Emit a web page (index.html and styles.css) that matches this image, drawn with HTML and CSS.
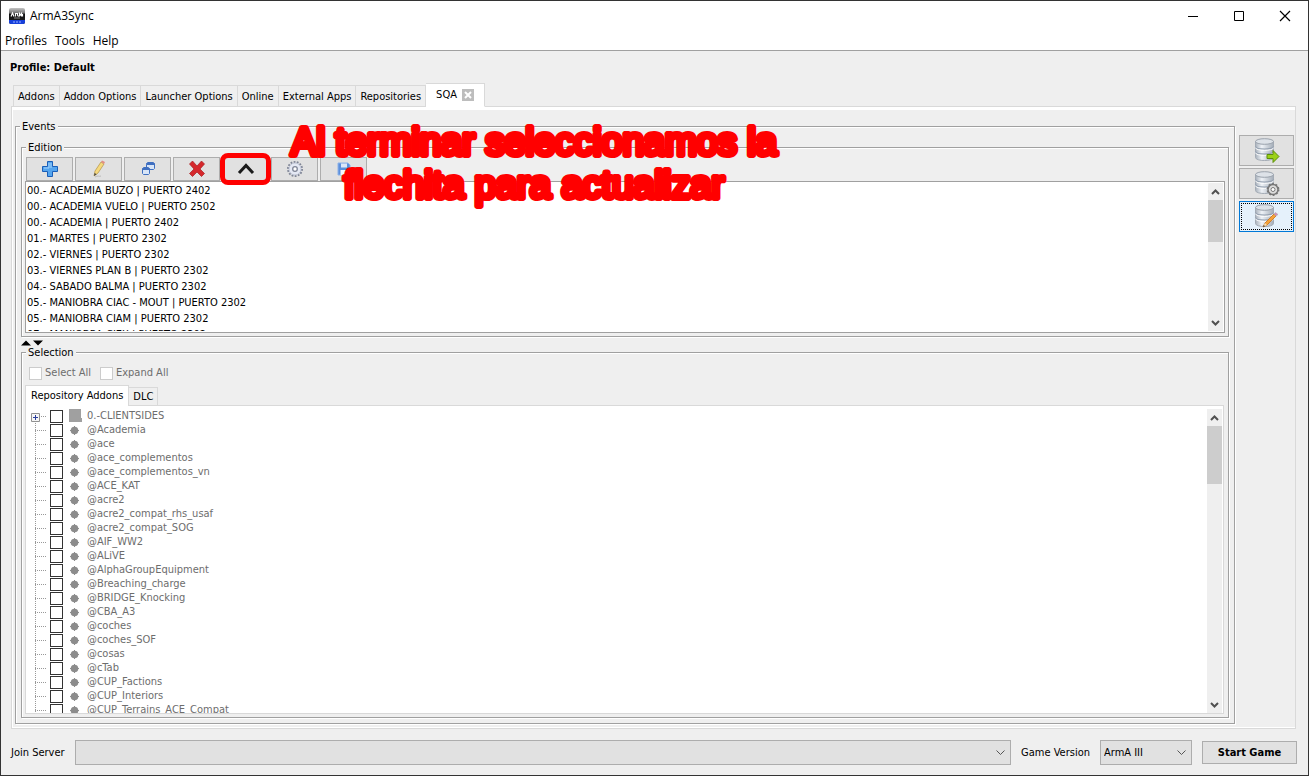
FILE: index.html
```
<!DOCTYPE html>
<html lang="en">
<head>
<meta charset="utf-8">
<title>ArmA3Sync</title>
<link rel="stylesheet" href="styles.css">
</head>
<body>
<svg class="defs" aria-hidden="true">
  <defs>
    <linearGradient id="steel" x1="0" x2="1" y1="0" y2="0">
      <stop offset="0" stop-color="#a9b1bb"/><stop offset=".35" stop-color="#eef2f7"/><stop offset="1" stop-color="#a4adb8"/>
    </linearGradient>
    <linearGradient id="badge" x1="0" x2="0" y1="0" y2="1">
      <stop offset="0" stop-color="#c4c4c4"/><stop offset=".3" stop-color="#777"/><stop offset=".4" stop-color="#111"/><stop offset="1" stop-color="#222"/>
    </linearGradient>
    <symbol id="up" viewBox="0 0 9 6"><path d="M1 5 4.500 1.500 8 5" fill="none" stroke="#505050" stroke-width="2"/></symbol>
    <symbol id="down" viewBox="0 0 9 6"><path d="M1 1 4.500 4.500 8 1" fill="none" stroke="#505050" stroke-width="2"/></symbol>
    <symbol id="db" viewBox="0 0 24 24">
      <path d="M1.500 3.500v16c0 4 18 4 18 0v-16z" fill="url(#steel)" stroke="#a3abb5"/>
      <path d="M1.500 8.500c0 3.500 18 3.500 18 0M1.500 13.500c0 3.500 18 3.500 18 0" fill="none" stroke="#95a1b1" stroke-width="1.300"/>
      <path d="M1.500 9.700c0 3.500 18 3.500 18 0M1.500 14.700c0 3.500 18 3.500 18 0" fill="none" stroke="#fff"/>
      <ellipse cx="10.500" cy="3.500" rx="9" ry="2.800" fill="#dde2e8" stroke="#9aa2ac"/>
    </symbol>
  </defs>
</svg>
<div class="window">
  <header class="titlebar">
    <svg class="app-icon" viewBox="0 0 16 16"><rect width="16" height="16" rx="2" fill="url(#badge)"/><path d="M0 12h16v2a2 2 0 0 1-2 2H2a2 2 0 0 1-2-2z" fill="#1740dc"/><path d="M2 8.500 3.500 5l1.500 3.500M6.500 8.500V5.500h2v1.500l1 1.500M10.500 8.500v-3l1 1.500 1-1.500v3M13.500 8.500V6" fill="none" stroke="#fff" stroke-width="1.200"/><path d="M5 10h6" stroke="#888"/><path d="M4 14h8" stroke="#9db2ff" stroke-dasharray="2 1"/></svg>
    <h1 class="app-name">ArmA3Sync</h1>
    <div class="window-buttons">
      <button class="window-button" aria-label="Minimize"><svg viewBox="0 0 12 12"><path d="M1 6.500h10" stroke="#000"/></svg></button>
      <button class="window-button" aria-label="Maximize"><svg viewBox="0 0 12 12"><path d="M1.500 1.500h9v9h-9z" fill="none" stroke="#000"/></svg></button>
      <button class="window-button" aria-label="Close"><svg viewBox="0 0 12 12"><path d="m1 1 10 10M11 1 1 11" stroke="#000" stroke-width="1.200"/></svg></button>
    </div>
  </header>
  <nav class="menubar">
    <button class="menu">Profiles</button><button class="menu">Tools</button><button class="menu">Help</button>
  </nav>
  <p class="profile">Profile: Default</p>
  <div class="tabs" role="tablist">
    <button class="tab" role="tab">Addons</button><button class="tab" role="tab">Addon Options</button><button class="tab" role="tab">Launcher Options</button><button class="tab" role="tab">Online</button><button class="tab" role="tab">External Apps</button><button class="tab" role="tab">Repositories</button><button class="tab tab-active" role="tab" aria-selected="true">SQA
      <svg class="tab-close" viewBox="0 0 12 12"><path d="M0 0h12v12H0z" fill="#bdbdbd"/><path d="m3 3 6 6M9 3 3 9" stroke="#fff" stroke-width="2"/></svg></button>
  </div>
  <main class="pane">
    <section class="group events">
      <h2 class="legend">Events</h2>
      <section class="group edition">
        <h2 class="legend">Edition</h2>
        <div class="toolbar">
          <button class="tool" aria-label="Add"><svg viewBox="0 0 18 18"><path d="M6.500 1.500h5v5h5v5h-5v5h-5v-5h-5v-5h5z" fill="#55a5ee" stroke="#1b5fb8"/><path d="M8 3v5H3M10 3v5" fill="none" stroke="#a4d3fb"/></svg></button>
          <button class="tool" aria-label="Edit"><svg viewBox="0 0 18 18"><path d="m4 16 1-5 6-9 3 2-6 9z" fill="#f6d97c" stroke="#b99a51" stroke-width=".8"/><path d="m11 2 1-1.500L15 2l-1 2z" fill="#e38d84"/><path d="m4 16 .6-3 2 1.200z" fill="#444"/><path d="M5 17c3-2 4 0 6-1" fill="none" stroke="#bbb"/></svg></button>
          <button class="tool" aria-label="Duplicate"><svg viewBox="0 0 18 18"><path d="M7.500 4.500v-1l1-1h6l1 1v5l-1 1h-6l-1-1z" fill="#d8e5f7" stroke="#3f6fc0"/><path d="M7.500 4h8" stroke="#3f6fc0" stroke-width="2"/><path d="M3.500 8.500l1-1h5l1 1v5l-1 1h-5l-1-1z" fill="#d8e5f7" stroke="#3f6fc0"/><path d="M3.500 9h7" stroke="#3f6fc0" stroke-width="2"/></svg></button>
          <button class="tool" aria-label="Delete"><svg viewBox="0 0 18 18"><path d="m1.500 4 3-3L9 6l4.500-5 3 3L12 9l4.500 4.500-3 3L9 12l-4.500 4.500-3-3L6 9z" fill="#d5282c" stroke="#a71b20" stroke-width=".7"/></svg></button>
          <button class="tool tool-marked" aria-label="Upload"><svg viewBox="0 0 18 18"><path d="m2 13 7-7.500L16 13" fill="none" stroke="#1a1a1a" stroke-width="3"/></svg></button>
          <button class="tool" aria-label="Settings"><svg viewBox="0 0 18 18"><circle cx="9" cy="9" r="7" fill="none" stroke="#7f8596" stroke-width="2" stroke-dasharray="1.800 1.340"/><circle cx="9" cy="9" r="6" fill="#e4e8f3" stroke="#b9bfd2" stroke-width=".8"/><circle cx="9" cy="9" r="2.300" fill="#fff" stroke="#7f8596" stroke-width="1.300"/></svg></button>
          <button class="tool" aria-label="Save"><svg viewBox="0 0 18 18"><path d="M3 3h10l2 2v10H3z" fill="#5b8fdc" stroke="#8db2e8"/><path d="M6 3.500h6v4H6z" fill="#dbe7f8"/><path d="M5.500 10h7v5h-7z" fill="#f4f8fe"/></svg></button>
        </div>
        <div class="list">
          <ul class="rows">
            <li class="row">00.- ACADEMIA BUZO | PUERTO 2402</li>
            <li class="row">00.- ACADEMIA VUELO | PUERTO 2502</li>
            <li class="row">00.- ACADEMIA | PUERTO 2402</li>
            <li class="row">01.- MARTES | PUERTO 2302</li>
            <li class="row">02.- VIERNES | PUERTO 2302</li>
            <li class="row">03.- VIERNES PLAN B | PUERTO 2302</li>
            <li class="row">04.- SABADO BALMA | PUERTO 2302</li>
            <li class="row">05.- MANIOBRA CIAC - MOUT | PUERTO 2302</li>
            <li class="row">05.- MANIOBRA CIAM | PUERTO 2302</li>
            <li class="row">07.- MANIOBRA CIEX | PUERTO 2302</li>
          </ul>
          <div class="scrollbar"><svg class="arrow"><use href="#up"/></svg><div class="track"><div class="thumb"></div></div><svg class="arrow"><use href="#down"/></svg></div>
        </div>
      </section>
      <div class="divider"><svg viewBox="0 0 22 6"><path d="M0 5.500 5 .5l5 5zM12 .5h10l-5 5z"/></svg></div>
      <section class="group selection">
        <h2 class="legend">Selection</h2>
        <div class="options">
          <label class="option"><input class="check" type="checkbox" disabled>Select All</label>
          <label class="option"><input class="check" type="checkbox" disabled>Expand All</label>
        </div>
        <div class="subtabs" role="tablist"><button class="subtab subtab-active" role="tab" aria-selected="true">Repository Addons</button><button class="subtab" role="tab">DLC</button></div>
        <div class="tree">
          <ul class="nodes" id="nodes"></ul>
          <div class="scrollbar"><svg class="arrow"><use href="#up"/></svg><div class="track"><div class="thumb thumb-tall"></div></div><svg class="arrow"><use href="#down"/></svg></div>
        </div>
      </section>
    </section>
    <aside class="side">
      <button class="side-button" aria-label="Connect repository"><svg viewBox="0 0 26 26"><use href="#db" width="24" height="24"/><path d="M13 16.500h6v-4l6 6-6 6v-4h-6z" fill="#9bd117" stroke="#5c8f0c"/></svg></button>
      <button class="side-button" aria-label="Repository settings"><svg viewBox="0 0 26 26"><use href="#db" width="24" height="24"/><circle cx="19" cy="18.500" r="5" fill="#ddd" stroke="#777" stroke-width="1.500"/><circle cx="19" cy="18.500" r="5.700" fill="none" stroke="#777" stroke-width="1.500" stroke-dasharray="1.800 1.800"/><circle cx="19" cy="18.500" r="2" fill="#fff" stroke="#777"/></svg></button>
      <button class="side-button side-button-active" aria-label="Edit events"><svg viewBox="0 0 26 26"><use href="#db" width="24" height="24"/><path d="m9 23 2-4L20 10l2 2-9 9z" fill="#f6a33a" stroke="#c9741a" stroke-width=".8"/><path d="m20 10 1.500-1.500 2.500 2L22 12z" fill="#d68bb8" stroke="#a9a9a9" stroke-width=".6"/><path d="m9 23 2-4 2 2z" fill="#f5dfb6"/><path d="m9 23 .8-2 1.200 1.200z" fill="#333"/></svg></button>
    </aside>
  </main>
  <footer class="footer">
    <label for="server">Join Server</label>
    <div class="combo combo-server"><select id="server" class="select"><option></option></select><svg class="combo-arrow" viewBox="0 0 9 6"><path d="m.5 .5 4 4 4-4" fill="none" stroke="#555"/></svg></div>
    <label for="version">Game Version</label>
    <div class="combo combo-version"><select id="version" class="select"><option>ArmA III</option></select><svg class="combo-arrow" viewBox="0 0 9 6"><path d="m.5 .5 4 4 4-4" fill="none" stroke="#555"/></svg></div>
    <button class="start">Start Game</button>
  </footer>
  <svg class="note" viewBox="0 0 500 92"><text class="note-text" x="250" y="36">Al terminar seleccionamos la</text><text class="note-text" x="250" y="79">flechita para actualizar</text></svg>
</div>
<script src="tree.js"></script>
</body>
</html>
```
FILE: tree.js
```
const names = ["0.-CLIENTSIDES", "@Academia", "@ace", "@ace_complementos", "@ace_complementos_vn", "@ACE_KAT", "@acre2", "@acre2_compat_rhs_usaf", "@acre2_compat_SOG", "@AIF_WW2", "@ALiVE", "@AlphaGroupEquipment", "@Breaching_charge", "@BRIDGE_Knocking", "@CBA_A3", "@coches", "@coches_SOF", "@cosas", "@cTab", "@CUP_Factions", "@CUP_Interiors", "@CUP_Terrains_ACE_Compat"];
const dot = '<svg class="kind" viewBox="0 0 13 14"><circle cx="5.500" cy="7.500" r="3.800" fill="#8c8c8c"/><path d="M5.500 3v9M1 7.500h9" stroke="#8c8c8c"/></svg>';
const folder = '<svg class="kind" viewBox="0 0 13 14"><path d="M0 0h12v9h1v4H0z" fill="#a0a0a0"/></svg>';
document.getElementById("nodes").innerHTML = names.map((name, i) =>
  `<li class="node">${i ? '<span class="branch"></span>' : '<button class="expander" aria-label="Expand"><svg viewBox="0 0 9 9"><path d="M.5 .5h8v8h-8z" fill="#f6f6f6" stroke="#919191"/><path d="M2 4.500h5M4.500 2v5" stroke="#2b3f9c"/></svg></button>'}<label class="node-label"><input class="node-check" type="checkbox">${i ? dot : folder}<span>${name}</span></label></li>`
).join("");
```
FILE: styles.css
```
* { box-sizing: border-box; }
body, h1, h2, p, ul { margin: 0; padding: 0; }
body { font: 11px/16px "DejaVu Sans Condensed", "DejaVu Sans", sans-serif; font-stretch: condensed; color: #000; }
button, select, input { font: inherit; color: inherit; margin: 0; border-radius: 0; }
button { padding: 0; border: 0; background: none; white-space: nowrap; }
svg { display: block; }
.defs { position: absolute; width: 0; height: 0; }

.window { position: relative; display: flex; flex-direction: column; height: 100vh; min-height: 560px; border: 1px solid #333; background: #efefef; overflow: hidden; }
.titlebar { display: flex; align-items: center; height: 30px; padding-left: 8px; background: #fff; flex: none; }
.app-icon { width: 16px; height: 16px; margin-right: 5px; }
.app-name { font: 12px/16px "Open Sans", "Noto Sans", sans-serif; }
.window-buttons { display: flex; margin-left: auto; }
.window-button { display: grid; place-items: center; width: 46px; height: 29px; }
.window-button svg { width: 12px; height: 12px; }
.menubar { display: flex; gap: 8px; height: 20px; padding-left: 4px; background: #fff; border-bottom: 1px solid #a0a0a0; flex: none; }
.menu { font: 12px/19px "Noto Sans", sans-serif; font-family: "Open Sans", "Noto Sans", sans-serif; }
.profile { padding: 9px 9px 7px; font-weight: bold; }

.tabs { display: flex; align-items: flex-end; margin: 0 12px -1px; position: relative; }
.tab { height: 22px; padding: 1px 4px 0; border: 1px solid #d9d9d9; border-left-width: 0; }
.tab:first-child { border-left-width: 1px; }
.tab-active { display: flex; align-items: center; gap: 5px; height: 24px; padding: 0 10px; background: #fff; border-bottom-color: #fff; }
.tab-close { width: 12px; height: 12px; }

.pane { display: flex; flex: 1; min-height: 0; gap: 4px; margin: 0 12px 0 10px; padding: 19px 1px 4px 3px; border: 1px solid #d9d9d9; box-shadow: inset 0 3px #fff, inset 1px -1px #fff; }
.group { display: flex; flex-direction: column; border: 1px solid #a0a0a0; box-shadow: 1px 1px #fff, inset 1px 1px #fff; }
.legend { align-self: flex-start; height: 16px; margin: -8px 0 0 1px; padding: 0 2px; font: inherit; background: #efefef; }
.events { flex: 1; min-width: 0; padding: 0 5px 5px; }
.events > .legend { margin-left: -1px; }
.edition { margin-top: 12px; padding: 0 3px 3px; }
.toolbar { display: flex; gap: 2px; padding: 1px 0 0 1px; }
.tool { position: relative; display: grid; place-items: center; width: 47px; height: 24px; background: #e1e1e1; border: 1px solid #adadad; }
.tool svg { width: 18px; height: 18px; }
.tool-marked::after { content: ""; position: absolute; inset: -5px -3px; border: 5px solid #f00; border-radius: 8px; }
.list { display: flex; height: 152px; padding: 1px; background: #fff; border: 1px solid #a0a0a0; }
.rows { flex: 1; overflow: hidden; list-style: none; }
.row { height: 16px; white-space: nowrap; }
.scrollbar { display: flex; flex-direction: column; width: 15px; background: #efefef; }
.arrow { width: 9px; height: 6px; margin: 6px 3px 5px; flex: none; }
.track { flex: 1; }
.thumb { height: 42px; background: #cdcdcd; }
.thumb-tall { height: 58px; }
.divider { position: relative; z-index: 1; height: 15px; padding-top: 3px; }
.divider svg { width: 22px; height: 6px; }
.selection { flex: 1; min-height: 0; padding: 0 4px 3px 3px; }
.options { display: flex; gap: 9px; padding: 4px 4px; color: #6d6d6d; }
.option { display: flex; align-items: center; gap: 3px; }
.check, .node-check { appearance: none; width: 13px; height: 13px; border: 1px solid #ccc; background: #fff; flex: none; }
.subtabs { display: flex; align-items: flex-end; margin-bottom: -1px; }
.subtab { height: 19px; padding: 0 4px; border: 1px solid #d9d9d9; border-left: 0; }
.subtab-active { height: 21px; padding: 0 5px; border-left: 1px solid #d9d9d9; border-bottom: 0; background: #fff; z-index: 1; }
.tree { display: flex; flex: 1; min-height: 0; padding: 3px 1px 0; background: #fff; border: 1px solid #d9d9d9; }
.nodes { flex: 1; overflow: hidden; list-style: none; padding-left: 4px; color: #6d6d6d; }
.node { display: flex; height: 14px; }
.expander { width: 19px; height: 14px; padding-top: 2px; background: repeating-linear-gradient(90deg, #999 0 1px, transparent 1px 2px) 10px 7px / 5px 1px no-repeat; }
.expander svg { width: 9px; height: 9px; }
.branch { width: 19px; height: 14px; background: repeating-linear-gradient(#999 0 1px, transparent 1px 2px) 4px 0 / 1px 14px no-repeat, repeating-linear-gradient(90deg, #999 0 1px, transparent 1px 2px) 4px 7px / 11px 1px no-repeat; }
.node-label { display: flex; align-items: center; line-height: 14px; white-space: nowrap; }
.node-check { border-color: #333; }
.kind { width: 13px; height: 14px; margin: 0 5px 0 6px; }
.side { display: flex; flex-direction: column; gap: 2px; width: 55px; margin-top: 9px; }
.side-button { display: grid; place-items: center; height: 31px; background: #e1e1e1; border: 1px solid #adadad; }
.side-button svg { width: 26px; height: 26px; }
.side-button-active { background: #e5f1fb; border-color: #0078d7; outline: 1px dotted #000; outline-offset: -3px; }

.footer { display: flex; align-items: center; gap: 10px; padding: 11px 11px 10px 10px; flex: none; }
.combo { position: relative; }
.combo-server { flex: 1; }
.combo-version { width: 92px; }
.select { display: block; appearance: none; width: 100%; height: 25px; padding: 0 3px; background: #e1e1e1; border: 1px solid #adadad; }
.combo-arrow { position: absolute; right: 6px; top: 10px; width: 9px; height: 6px; pointer-events: none; }
.start { width: 95px; height: 23px; font-weight: bold; background: #e1e1e1; border: 1px solid #adadad; }

.note { position: absolute; left: 283px; top: 118px; width: 500px; height: 92px; pointer-events: none; }
.note-text { font: 38px "Liberation Sans", Arial, sans-serif; text-anchor: middle; fill: #f00; stroke: #f00; stroke-width: 6px; stroke-linejoin: round; }
```
